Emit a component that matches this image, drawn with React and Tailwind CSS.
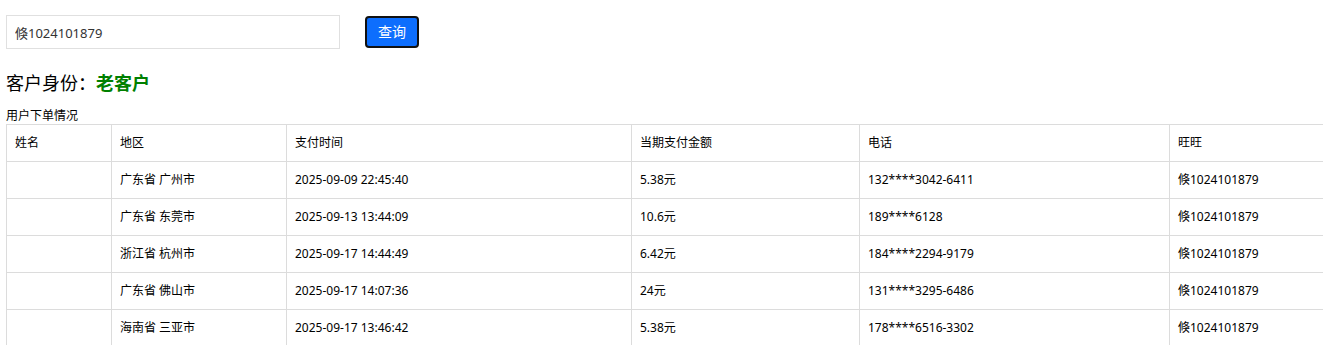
import React, { useState } from 'react';

const rows = [
  { name: '', area: '广东省 广州市', time: '2025-09-09 22:45:40', amount: '5.38元', phone: '132****3042-6411', ww: '倏1024101879' },
  { name: '', area: '广东省 东莞市', time: '2025-09-13 13:44:09', amount: '10.6元', phone: '189****6128', ww: '倏1024101879' },
  { name: '', area: '浙江省 杭州市', time: '2025-09-17 14:44:49', amount: '6.42元', phone: '184****2294-9179', ww: '倏1024101879' },
  { name: '', area: '广东省 佛山市', time: '2025-09-17 14:07:36', amount: '24元', phone: '131****3295-6486', ww: '倏1024101879' },
  { name: '', area: '海南省 三亚市', time: '2025-09-17 13:46:42', amount: '5.38元', phone: '178****6516-3302', ww: '倏1024101879' },
];

const cols = ['w-[105px]', 'w-[175px]', 'w-[345px]', 'w-[228px]', 'w-[310px]', 'w-[200px]'];
const heads = ['姓名', '地区', '支付时间', '当期支付金额', '电话', '旺旺'];

const App = () => {
  const [keyword, setKeyword] = useState('倏1024101879');

  return (
    <div className="min-h-screen bg-white text-black overflow-hidden font-['Noto_Sans','Noto_Sans_CJK_SC',sans-serif]">
      <div className="flex items-center pl-[6px] pt-[15px]">
        <input
          type="text"
          value={keyword}
          onChange={(e) => setKeyword(e.target.value)}
          className="w-[334px] h-[34px] border border-[#e0e0e0] px-[8px] text-[13px] text-[#333] outline-none"
        />
        <button className="ml-[25px] w-[54px] h-[32px] rounded-[4px] bg-[#0d6efd] border-2 border-[#111] text-white text-[14px] leading-none">
          查询
        </button>
      </div>

      <div className="pl-[6px] mt-[22px] h-[24px] flex items-center text-[18px] leading-[24px]">
        <span>客户身份：</span>
        <span className="font-bold text-[#008000]">老客户</span>
      </div>

      <div className="pl-[6px] mt-[13px] text-[12px] leading-[16px]">用户下单情况</div>

      <table className="ml-[6px] border-collapse table-fixed w-[1363px] text-[12px]">
        <thead>
          <tr className="h-[37px]">
            {heads.map((h, i) => (
              <th key={h} className={`${cols[i]} border border-[#dcdcdc] px-[8px] text-left font-normal align-middle`}>
                {h}
              </th>
            ))}
          </tr>
        </thead>
        <tbody>
          {rows.map((r, i) => (
            <tr key={i} className="h-[37px]">
              <td className="border border-[#dcdcdc] px-[8px]">{r.name}</td>
              <td className="border border-[#dcdcdc] px-[8px]">{r.area}</td>
              <td className="border border-[#dcdcdc] px-[8px]">{r.time}</td>
              <td className="border border-[#dcdcdc] px-[8px]">{r.amount}</td>
              <td className="border border-[#dcdcdc] px-[8px]">{r.phone}</td>
              <td className="border border-[#dcdcdc] px-[8px]">{r.ww}</td>
            </tr>
          ))}
        </tbody>
      </table>
    </div>
  );
};

export default App;
